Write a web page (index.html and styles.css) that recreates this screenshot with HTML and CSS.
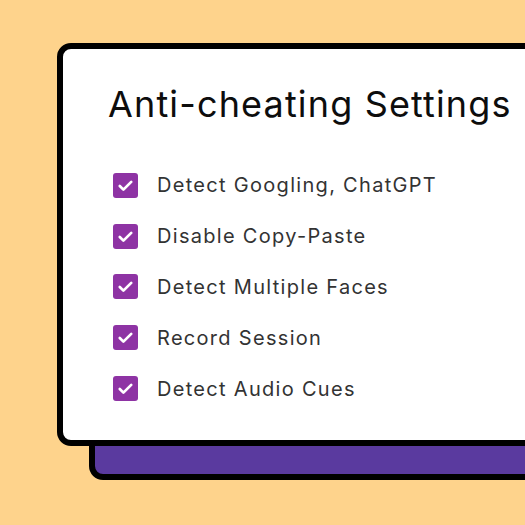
FILE: index.html
```html
<!DOCTYPE html>
<html lang="en">
<head>
    <meta charset="UTF-8">
    <meta name="viewport" content="width=device-width, initial-scale=1.0">
    <title>Anti-cheating Settings</title>
    <link rel="stylesheet" href="styles.css">
</head>
<body>
    <div class="stage">
        <div class="card">
            <h1 class="title">Anti-cheating Settings</h1>
            <ul class="settings">
                <li class="setting"><span class="check"><svg viewBox="0 0 24 24"><path d="M6.5 12.5l3.5 3.5 7.5-7.5"/></svg></span>Detect Googling, ChatGPT</li>
                <li class="setting"><span class="check"><svg viewBox="0 0 24 24"><path d="M6.5 12.5l3.5 3.5 7.5-7.5"/></svg></span>Disable Copy-Paste</li>
                <li class="setting"><span class="check"><svg viewBox="0 0 24 24"><path d="M6.5 12.5l3.5 3.5 7.5-7.5"/></svg></span>Detect Multiple Faces</li>
                <li class="setting"><span class="check"><svg viewBox="0 0 24 24"><path d="M6.5 12.5l3.5 3.5 7.5-7.5"/></svg></span>Record Session</li>
                <li class="setting"><span class="check"><svg viewBox="0 0 24 24"><path d="M6.5 12.5l3.5 3.5 7.5-7.5"/></svg></span>Detect Audio Cues</li>
            </ul>
        </div>
    </div>
</body>
</html>
```

FILE: styles.css
```css
body {
    margin: 0;
    background-color: #fed38c;
    font-family: 'Inter', 'Noto Sans', sans-serif;
}
.stage {
    position: relative;
    z-index: 0;
    width: 525px;
    height: 525px;
    overflow: hidden;
    padding: 43px 0 0 57px;
    box-sizing: border-box;
}
.card {
    position: relative;
    width: 560px;
    height: 403px;
    box-sizing: border-box;
    border: 6px solid #000;
    border-radius: 14px;
    background-color: #fff;
    padding: 31px 0 0 45px;
}
/* purple slab behind the card */
.card::before {
    content: "";
    position: absolute;
    z-index: -1;
    top: 100px;
    left: 26px;
    right: -100px;
    bottom: -40px;
    border: 6px solid #000;
    border-radius: 14px;
    background-color: #5a3a9f;
}
.title {
    margin: 0 0 32px;
    font-size: 36px;
    font-weight: 400;
    line-height: 48px;
    letter-spacing: 1.15px;
    color: #0d0d0d;
    white-space: nowrap;
}
.settings {
    list-style: none;
    margin: 0;
    padding: 0 0 0 5px;
}
.setting {
    display: flex;
    align-items: center;
    gap: 19px;
    height: 50.8px;
    font-size: 20px;
    letter-spacing: 1.3px;
    color: #333;
}
.check {
    display: flex;
    width: 25px;
    height: 25px;
    border-radius: 3px;
    background-color: #8e33a4;
}
.check svg {
    width: 25px;
    height: 25px;
    fill: none;
    stroke: #fff;
    stroke-width: 2.6;
    stroke-linecap: round;
    stroke-linejoin: round;
}
```
